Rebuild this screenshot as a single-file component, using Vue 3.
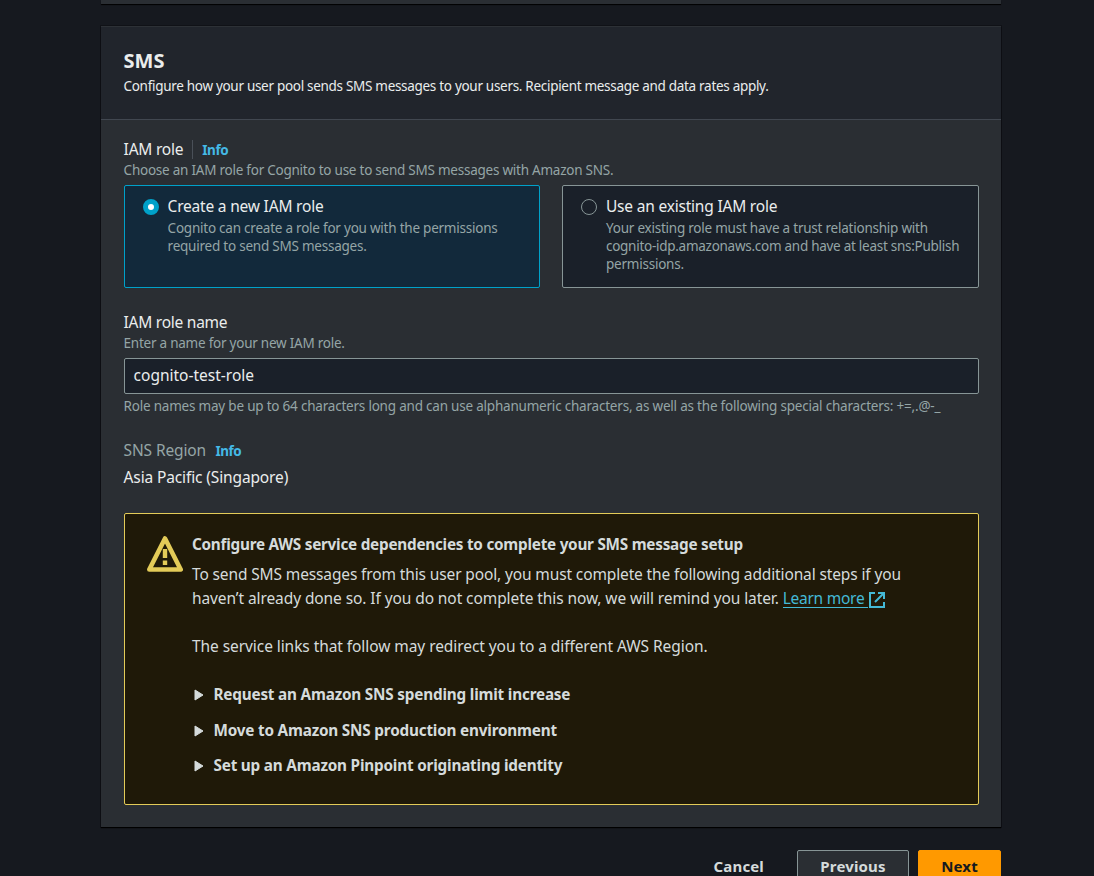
<script setup>
const steps = [
  'Request an Amazon SNS spending limit increase',
  'Move to Amazon SNS production environment',
  'Set up an Amazon Pinpoint originating identity',
]
</script>

<template>
  <div class="page">
    <div class="prev-panel"></div>
    <section class="panel">
      <header class="head">
        <h2>SMS</h2>
        <p class="sub">Configure how your user pool sends SMS messages to your users. Recipient message and data rates apply.</p>
      </header>
      <div class="body">
        <div class="label split"><span class="t-role">IAM role</span><a class="info">Info</a></div>
        <p class="hint">Choose an IAM role for Cognito to use to send SMS messages with Amazon SNS.</p>
        <div class="tiles">
          <div class="tile on">
            <span class="radio"></span>
            <div>
              <div class="tname">Create a new IAM role</div>
              <p class="tdesc">Cognito can create a role for you with the permissions<br>required to send SMS messages.</p>
            </div>
          </div>
          <div class="tile">
            <span class="radio"></span>
            <div>
              <div class="tname">Use an existing IAM role</div>
              <p class="tdesc">Your existing role must have a trust relationship with<br><span class="t-idp">cognito-idp.amazonaws.com and have at least sns:Publish</span><br>permissions.</p>
            </div>
          </div>
        </div>
        <div class="label name">IAM role name</div>
        <p class="hint">Enter a name for your new IAM role.</p>
        <div class="input">cognito-test-role</div>
        <p class="hint constraint">Role names may be up to 64 characters long and can use alphanumeric characters, as well as the following special characters: +=,.@-_</p>
        <div class="label region"><span>SNS Region</span><a class="info">Info</a></div>
        <div class="value">Asia Pacific (Singapore)</div>

        <div class="alert">
          <svg class="warn" viewBox="0 0 36 36" width="36" height="36">
            <path d="M18 2.5 L33.7 33.5 H2.3 Z" fill="none" stroke="#e3cb58" stroke-width="4.6" stroke-linejoin="round" />
            <path d="M18 13v9M18 24.5v4.5" stroke="#e3cb58" stroke-width="4.4" />
          </svg>
          <div>
            <div class="atitle">Configure AWS service dependencies to complete your SMS message setup</div>
            <p class="atext">To send SMS messages from this user pool, you must complete the following additional steps if you<br><span class="t-later">haven’t already done so. If you do not complete this now, we will remind you later. </span><a class="more">Learn more&nbsp;</a><svg class="ext" viewBox="0 0 16 16" width="16" height="16"><path d="M6 1H1v14h14v-5M9 1h6v6M15 1L6 10" fill="none" stroke="#44b9d6" stroke-width="2" /></svg></p>
            <p class="atext gap">The service links that follow may redirect you to a different AWS Region.</p>
            <ul>
              <li v-for="s in steps" :key="s">
                <svg viewBox="0 0 10 12" width="10" height="12"><path d="M1 1L9 6L1 11Z" fill="#d5dbdb" stroke="#d5dbdb" stroke-linejoin="round" /></svg>
                <span>{{ s }}</span>
              </li>
            </ul>
          </div>
        </div>
      </div>
    </section>
    <footer class="actions">
      <a class="cancel">Cancel</a>
      <div class="btn">Previous</div>
      <div class="btn primary">Next</div>
    </footer>
  </div>
</template>

<style>
html, body { margin: 0; height: 876px; overflow: hidden; background: #16191f; }
</style>
<style scoped>
.page { width: 1094px; height: 876px; overflow: hidden; background: #16191f; color: #eaeded; font: 400 15.5px/24px "Noto Sans", "Open Sans", sans-serif; letter-spacing: -0.13px; white-space: nowrap; }
p, h2, ul { margin: 0; padding: 0; }
.prev-panel { width: 900px; height: 4px; margin: 0 0 22px 101px; background: #2a2e33; box-shadow: 0 1px 1px #000; }
.panel { width: 900px; height: 801px; margin-left: 101px; box-sizing: border-box; background: #2a2e33; border-top: 1px solid #2d3136; box-shadow: 0 1px 1px #000, 0 0 0 1px #101217; }
.head { height: 93px; box-sizing: border-box; padding: 21px 22.5px 0; background: #21252c; border-bottom: 1px solid #414750; }
h2 { font-size: 20px; line-height: 26px; font-weight: 700; letter-spacing: 0; }
.sub { font-size: 13.5px; line-height: 24px; letter-spacing: -0.3px; }
.body { padding: 18px 22px 0 22.6px; }
.label { display: flex; align-items: center; height: 22px; line-height: 22px; }
.t-role { letter-spacing: -0.22px; }
.split .info { padding-left: 9px; margin-left: 9px; border-left: 1px solid #4a5058; line-height: 18px; }
.info { font-size: 13.5px; font-weight: 700; color: #44b9e6; letter-spacing: -0.45px; padding-top: 1px; }
.hint { font-size: 13.5px; line-height: 20px; color: #95a5a6; letter-spacing: -0.24px; }
.tiles { display: grid; grid-template-columns: 416px 417px; column-gap: 22px; margin: 5px 0 0 0.4px; }
.tile { height: 103px; box-sizing: border-box; display: flex; padding: 8px 0 0 18px; border: 1px solid #879596; border-radius: 2px; background: #1a2029; }
.tile.on { background: #12293b; border-color: #00a1c9; }
.radio { width: 16px; height: 16px; box-sizing: border-box; margin: 5px 9px 0 0; border: 1px solid #879596; border-radius: 50%; flex: none; }
.on .radio { border: 5px solid #00a1c9; background: #fff; margin-right: 8.6px; }
.tname { line-height: 24px; letter-spacing: -0.2px; }
.tdesc { margin-top: 1px; font-size: 13.5px; line-height: 18px; color: #95a5a6; letter-spacing: -0.23px; }
.t-idp { letter-spacing: -0.27px; }
.name { margin-top: 23px; letter-spacing: -0.25px; }
.input { height: 36px; box-sizing: border-box; margin: 5px 0 0 0.4px; padding-left: 8.6px; border: 1px solid #879596; border-radius: 2px; background: #1a2029; line-height: 33px; letter-spacing: 0; }
.constraint { margin-top: 2px; letter-spacing: -0.21px; }
.region { margin-top: 23px; color: #95a5a6; }
.region .info { margin-left: 9.4px; }
.value { margin-top: 4px; }
.alert { height: 292px; box-sizing: border-box; display: flex; gap: 9px; margin: 24px 0 0 0.4px; padding: 18px 0 0 22px; border: 1px solid #e3cb58; border-radius: 2px; background: #1f1908; color: #d5dbdb; }
.warn { flex: none; margin-top: 4px; }
.atitle { font-size: 15.3px; font-weight: 700; letter-spacing: -0.25px; }
.atext { margin-top: 6px; }
.atext.gap { margin-top: 24px; letter-spacing: -0.07px; }
.t-later { letter-spacing: -0.09px; }
.more { display: inline-block; height: 21px; line-height: 24px; border-bottom: 1px solid #44b9d6; color: #44b9d6; letter-spacing: -0.26px; }
.ext { vertical-align: -4px; margin-left: 0.5px; }
ul { list-style: none; margin-top: 24px; font-size: 15.3px; font-weight: 700; letter-spacing: -0.2px; }
li { display: flex; align-items: center; gap: 9.5px; height: 24px; margin-bottom: 11.7px; padding-left: 2px; }
li svg { position: relative; top: 1px; }
.actions { display: flex; justify-content: flex-end; width: 900px; margin: 23px 0 0 101px; font-size: 15px; font-weight: 700; letter-spacing: 0.15px; }
.cancel { margin-right: 33px; line-height: 32px; color: #d5dbdb; }
.btn { width: 112px; height: 36px; box-sizing: border-box; border: 1px solid #879596; border-radius: 2px; background: #2a2e33; color: #d5dbdb; text-align: center; line-height: 30px; }
.primary { width: 83px; margin-left: 9px; background: #ff9900; border-color: #ff9900; color: #16191f; }
</style>
